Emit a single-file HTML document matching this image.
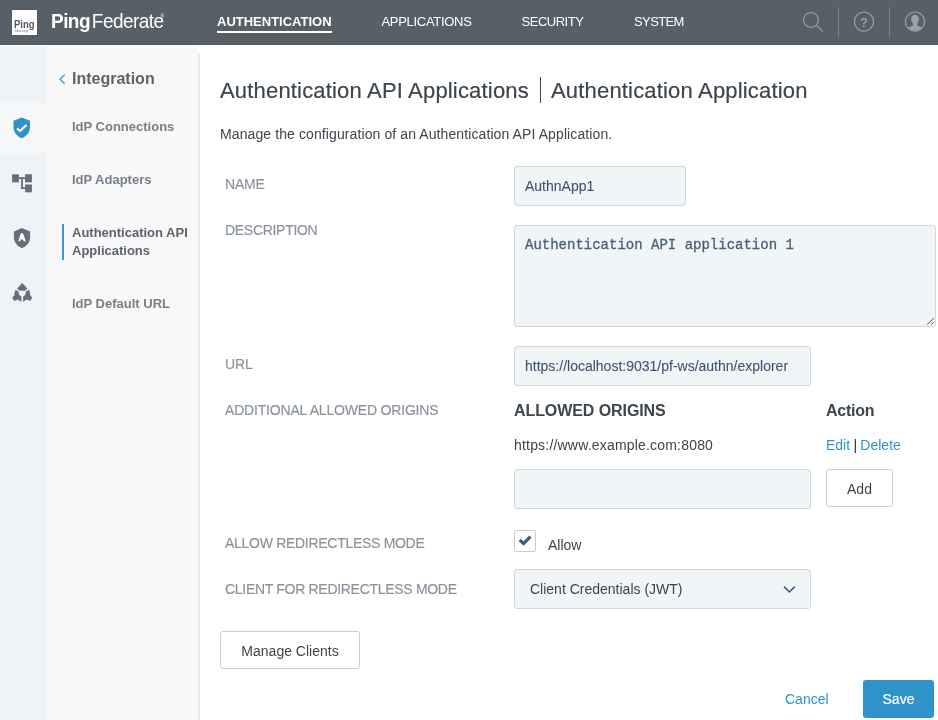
<!DOCTYPE html>
<html><head><meta charset="utf-8">
<title>PingFederate</title>
<style>
*{box-sizing:border-box;margin:0;padding:0}
body{will-change:transform}html,body{width:938px;height:720px;overflow:hidden;background:#fff;font-family:"Liberation Sans",sans-serif;color:#3d454d}
.abs{position:absolute}
#hdr{position:absolute;left:0;top:0;width:938px;height:45px;background:#575f67;border-bottom:1px solid #4e565d}
#rail{position:absolute;left:0;top:46px;width:47px;height:674px;background:#eef3f7}
#railsel{position:absolute;left:0;top:103px;width:47px;height:50px;background:#f8f8f8}
#side{position:absolute;left:47px;top:46px;width:151px;height:674px;background:#f8f8f8}#sideb{position:absolute;left:198px;top:53px;width:2px;height:667px;background:#e6eaee}
.nav{position:absolute;top:14px;font-size:13px;color:#fff;line-height:16px;white-space:nowrap}
.lbl{position:absolute;left:225px;font-size:14px;color:#89929b;-webkit-text-stroke:0.15px #89929b;white-space:nowrap;line-height:16px}
.inp{position:absolute;background:#f0f5f8;border:1px solid #d4d7da;border-radius:3px;font-size:14px;color:#3f546c;-webkit-text-stroke:0.08px #3f546c;line-height:16px;white-space:nowrap}
.sitem{position:absolute;left:72px;font-size:13px;font-weight:bold;color:#77808a;line-height:18px;white-space:nowrap}
.btn{position:absolute;background:#fff;border:1px solid #cccfd2;border-radius:3px;font-size:14px;color:#3d454d;text-align:center;white-space:nowrap}
a{color:#2e93c9;text-decoration:none}
</style></head><body>
<div id="hdr">
  <div class="abs" style="left:12px;top:10px;width:25px;height:25px;background:#fff;box-shadow:0 0 0 0.5px #4e565e"></div>
  <div class="abs" id="plogo" style="left:14.3px;top:17px;font-size:11px;font-weight:bold;color:#4f5861;line-height:14px;transform:scaleX(0.86);transform-origin:0 0">Ping</div>
  <div class="abs" style="left:14.4px;top:29px;font-size:4px;color:#727a83;line-height:4px;letter-spacing:0.1px">Identity</div>
  <div class="abs" id="brand" style="left:51px;top:9px;font-size:21px;color:#fff;line-height:24px;white-space:nowrap;letter-spacing:-0.6px;transform:scaleX(0.905);transform-origin:0 0"><b>Ping</b><span style="margin-left:2px">Federate</span><span style="font-size:5px;position:relative;top:-10px;margin-left:-3px;letter-spacing:0">®</span></div>
  <div class="nav" id="n1" style="left:217px;font-weight:bold">AUTHENTICATION</div>
  <div class="abs" style="left:217px;top:31px;width:115px;height:2px;background:#fff"></div>
  <div class="nav" id="n2" style="left:381.5px;letter-spacing:-0.3px">APPLICATIONS</div>
  <div class="nav" id="n3" style="left:521.6px;letter-spacing:-0.5px">SECURITY</div>
  <div class="nav" id="n4" style="left:634px;letter-spacing:-0.6px">SYSTEM</div>
  <svg class="abs" style="left:795px;top:0" width="143" height="45" viewBox="795 0 143 45" fill="none" stroke="#9ba1a8" stroke-width="1.3">
    <circle cx="811" cy="19.8" r="7.4" stroke-width="1.05"/><path d="M816.3 25.1 L822.9 31.5" stroke-width="1.05"/>
    <path d="M838.5 7V37M889.5 7V37" stroke="#7b838b" stroke-width="1"/>
    <circle cx="864" cy="21.6" r="9.6" stroke-width="1.2"/>
    <circle cx="915" cy="21.6" r="9.6" stroke-width="1.2"/>
    <clipPath id="uc"><circle cx="915" cy="21.6" r="9.2"/></clipPath>
    <g clip-path="url(#uc)" fill="#9ba1a8" stroke="none">
      <ellipse cx="915" cy="19.3" rx="3.9" ry="4.5"/>
      <path d="M904 32 V29.6 L908.3 27.6 L913 25.6 V22 H917.4 V25.6 L921.8 27.6 L926 29.6 V32 Z"/>
    </g>
  </svg>
  <div class="abs" style="left:858px;top:14.5px;width:12px;text-align:center;font-size:12px;font-weight:bold;color:#9ba1a8;line-height:16px">?</div>
</div>
<div id="rail"></div><div id="railsel"></div>
<svg class="abs" style="left:0;top:100px" width="47" height="220" viewBox="0 100 47 220">
  <path d="M21.75 117.6 L30 120.8 V127.3 C30 132.6 26.2 136.2 21.75 138.3 C17.3 136.2 13.5 132.6 13.5 127.3 V120.8 Z" fill="#2f93c8"/>
  <path d="M17.1 128.4 L19.9 131.1 L26.5 124.9" fill="none" stroke="#fff" stroke-width="2"/>
  <g fill="#666e77">
    <rect x="12.1" y="174.3" width="6.8" height="8"/><rect x="25.1" y="174.3" width="6.8" height="8"/><rect x="25.1" y="184.5" width="6.8" height="7.8"/>
    <rect x="18.5" y="177.3" width="7" height="1.7"/><rect x="21.1" y="177.3" width="1.8" height="11.7"/><rect x="21.1" y="187.3" width="4.5" height="1.7"/>
    <path d="M21.9 227.9 L30.1 231.6 V237.5 C30.1 242.6 26.4 246.2 21.9 248.2 C17.4 246.2 13.9 242.6 13.9 237.5 V231.6 Z"/>
    <path d="M22.25 283 L27.3 288.4 L24.6 291.1 Q22.25 289.9 19.9 291.1 L17.2 288.4 Z"/>
    <path d="M15.6 289.7 L18.7 291.8 Q18.3 294.9 21.4 296.7 L21.4 301.8 L17.6 299.6 L14.3 300.9 L12.2 297.6 L14.3 295.4 Q14 292 15.6 289.7 Z"/>
    <path d="M28.9 289.7 L25.8 291.8 Q26.2 294.9 23.1 296.7 L23.1 301.8 L26.9 299.6 L30.2 300.9 L32.3 297.6 L30.2 295.4 Q30.5 292 28.9 289.7 Z"/>
  </g>
  <path d="M20.5 233.9 Q21.9 231.9 23.3 233.9 L25.8 241.2 H23.7 L23 239.5 H20.8 L20.1 241.2 H18.3 Z" fill="#fff"/>
</svg>
<div id="side"></div><div id="sideb"></div>

<div class="abs" id="integ" style="left:72px;top:70px;font-size:16px;font-weight:bold;color:#5b646d;line-height:18px;white-space:nowrap">Integration</div>
<svg class="abs" style="left:57px;top:72px" width="10" height="14" viewBox="0 0 10 14" fill="none" stroke="#3a9ad0" stroke-width="1.3"><path d="M7.6 2.8 L3 7.3 L7.6 11.8"/></svg>
<div class="sitem" id="s1" style="top:118px">IdP Connections</div>
<div class="sitem" id="s2" style="top:171px">IdP Adapters</div>
<div class="sitem" id="s3" style="top:224px;color:#5b646d">Authentication API<br>Applications</div>
<div class="abs" style="left:62px;top:224px;width:2px;height:36px;background:#3a9ad0"></div>
<div class="sitem" id="s4" style="top:295px">IdP Default URL</div>

<div class="abs" id="title" style="-webkit-text-stroke:0.2px #3d454d;left:220px;top:78px;font-size:22px;line-height:26px;color:#3d454d;white-space:nowrap;letter-spacing:0.18px">Authentication API Applications</div>
<div class="abs" style="left:540px;top:77px;width:1px;height:26px;background:#3d454d"></div>
<div class="abs" id="title2" style="-webkit-text-stroke:0.2px #3d454d;left:551px;top:78px;font-size:22px;line-height:26px;color:#3d454d;white-space:nowrap;letter-spacing:0.18px">Authentication Application</div>
<div class="abs" id="desc" style="left:220px;top:125px;font-size:14px;line-height:18px;color:#3d454d;white-space:nowrap;letter-spacing:0.1px">Manage the configuration of an Authentication API Application.</div>

<div class="lbl" id="l1" style="letter-spacing:-0.2px;top:176px">NAME</div>
<div class="lbl" id="l2" style="letter-spacing:-0.3px;top:222px">DESCRIPTION</div>
<div class="lbl" id="l3" style="letter-spacing:-0.1px;top:356px">URL</div>
<div class="lbl" id="l4" style="letter-spacing:-0.18px;top:402px">ADDITIONAL ALLOWED ORIGINS</div>
<div class="lbl" id="l5" style="letter-spacing:-0.29px;top:535px">ALLOW REDIRECTLESS MODE</div>
<div class="lbl" id="l6" style="letter-spacing:-0.3px;top:581px">CLIENT FOR REDIRECTLESS MODE</div>

<div class="inp" style="left:514px;top:166px;width:172px;height:40px;padding:11px 10px"><span id="i1">AuthnApp1</span></div>
<div class="inp" style="left:514px;top:225px;width:422px;height:102px;padding:11px 10px;font-family:'Liberation Mono',monospace;font-size:14px;color:#4b5f78;-webkit-text-stroke:0.3px #4b5f78"><span id="i2">Authentication API application 1</span></div>
<svg class="abs" style="left:924px;top:315px" width="10" height="10" viewBox="0 0 10 10" stroke="#555c63" stroke-width="1"><path d="M3.2 9.6 L9.9 3.2 M7.2 9.6 L9.9 7"/></svg>
<div class="inp" style="left:514px;top:346px;width:297px;height:40px;padding:11px 10px"><span id="i3">https://localhost:9031/pf-ws/authn/explorer</span></div>

<div class="abs" id="ao" style="letter-spacing:-0.08px;left:514px;top:402px;font-size:16px;font-weight:bold;line-height:18px;color:#3d454d;white-space:nowrap">ALLOWED ORIGINS</div>
<div class="abs" id="act" style="letter-spacing:-0.25px;left:826px;top:402px;font-size:16px;font-weight:bold;line-height:18px;color:#3d454d;white-space:nowrap">Action</div>
<div class="abs" id="orig" style="left:514px;top:436px;letter-spacing:0.19px;font-size:14px;line-height:18px;color:#3d454d;white-space:nowrap">https://www.example.com:8080</div>
<div class="abs" id="ed" style="word-spacing:-0.6px;left:826px;top:436px;font-size:14px;line-height:18px;color:#3d454d;white-space:nowrap"><a>Edit</a> <span style="color:#23292f">|</span> <a>Delete</a></div>
<div class="inp" style="left:514px;top:469px;width:297px;height:40px"></div>
<div class="btn" style="left:826px;top:469px;width:67px;height:38px;line-height:38px"><span id="add">Add</span></div>

<div class="abs" style="left:514px;top:530px;width:22px;height:22px;background:#fff;border:1px solid #c8cdd1;border-radius:2px"></div>
<svg class="abs" style="left:514px;top:530px" width="22" height="22" viewBox="514 530 22 22" fill="none" stroke="#40587a" stroke-width="3.2"><path d="M519.8 540 L523.6 543.6 L530.4 536.6"/></svg>
<div class="abs" id="allow" style="left:548px;top:536px;font-size:14px;line-height:18px;color:#3d454d">Allow</div>

<div class="inp" style="left:514px;top:569px;width:297px;height:40px;padding:11px 15px;font-size:14px;color:#3d454d;-webkit-text-stroke:0"><span id="sel">Client Credentials (JWT)</span></div>
<svg class="abs" style="left:780px;top:582px" width="20" height="14" viewBox="780 582 20 14" fill="none" stroke="#3d5673" stroke-width="1.5"><path d="M784 586.6 L789.4 592 L794.8 586.6"/></svg>

<div class="btn" style="left:220px;top:631px;width:140px;height:38px;line-height:38px"><span id="mc">Manage Clients</span></div>
<div class="abs" id="cancel" style="left:785px;top:690px;font-size:14px;line-height:18px;white-space:nowrap"><a>Cancel</a></div>
<div class="abs" style="left:863px;top:680px;width:71px;height:38px;background:#2e93c9;border-radius:3px;color:#fff;font-size:14px;line-height:38px;text-align:center;-webkit-text-stroke:0.2px #fff"><span id="save">Save</span></div>
</body></html>
